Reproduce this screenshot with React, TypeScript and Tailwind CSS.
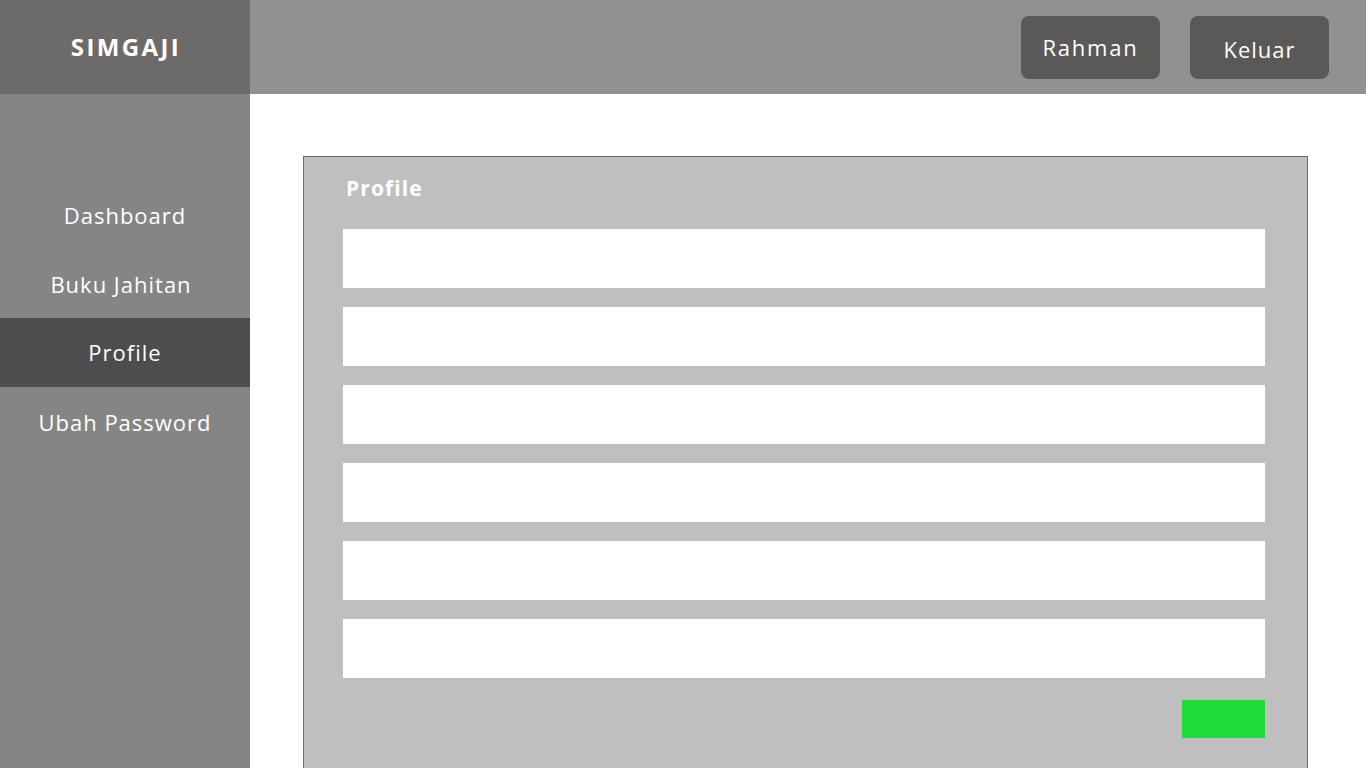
import React from "react";

const font = { fontFamily: '"Open Sans", "Noto Sans", sans-serif' };

export default function App() {
  const nav = ["Dashboard", "Buku Jahitan", "Profile", "Ubah Password"];
  return (
    <div className="w-[1366px] h-[768px] overflow-hidden flex flex-col bg-white" style={font}>
      <div className="flex h-[94px] shrink-0 bg-[#93918f]">
        <div className="w-[250px] bg-[#6d6b69] flex items-center justify-center text-white font-bold text-[24px] tracking-[2.4px] pl-[2px]">
          SIMGAJI
        </div>
        <div className="flex-1 flex items-center justify-end gap-[30px] pr-[37px]">
          <button className="w-[139px] h-[63px] rounded-[8px] bg-[#5b5957] text-white text-[22px] tracking-[1.8px]">
            Rahman
          </button>
          <button className="w-[139px] h-[63px] rounded-[8px] bg-[#5b5957] text-white text-[22px] tracking-[1px] pt-[4px]">
            Keluar
          </button>
        </div>
      </div>
      <div className="flex flex-1 min-h-0">
        <div className="w-[250px] bg-[#858585] pt-[86px] flex flex-col">
          {nav.map((n) => (
            <div
              key={n}
              className={`h-[69px] flex items-center justify-center text-white text-[22px] tracking-[1px] ${
                n === "Profile" ? "bg-[#4d4d4d] pt-[0px]" : "pt-[2px]"
              } ${n === "Buku Jahitan" ? "pr-[8px]" : ""}`}
            >
              {n}
            </div>
          ))}
        </div>
        <div className="flex-1 pt-[62px] pl-[53px] pr-[58px]">
          <div className="h-[700px] bg-[#bfbfbf] border border-[#6b6b6b] pt-[18px] pl-[39px] pr-[42px]">
            <div className="text-white font-bold text-[21px] pl-[3px] h-[27px] leading-[27px] tracking-[1.1px]">Profile</div>
            <div className="mt-[27px] flex flex-col gap-[19px]">
              {[0, 1, 2, 3, 4, 5].map((i) => (
                <div key={i} className="h-[59px] bg-white" />
              ))}
            </div>
            <div className="flex justify-end mt-[22px]">
              <button className="w-[83px] h-[38px] bg-[#1fdc3a]" />
            </div>
          </div>
        </div>
      </div>
    </div>
  );
}
